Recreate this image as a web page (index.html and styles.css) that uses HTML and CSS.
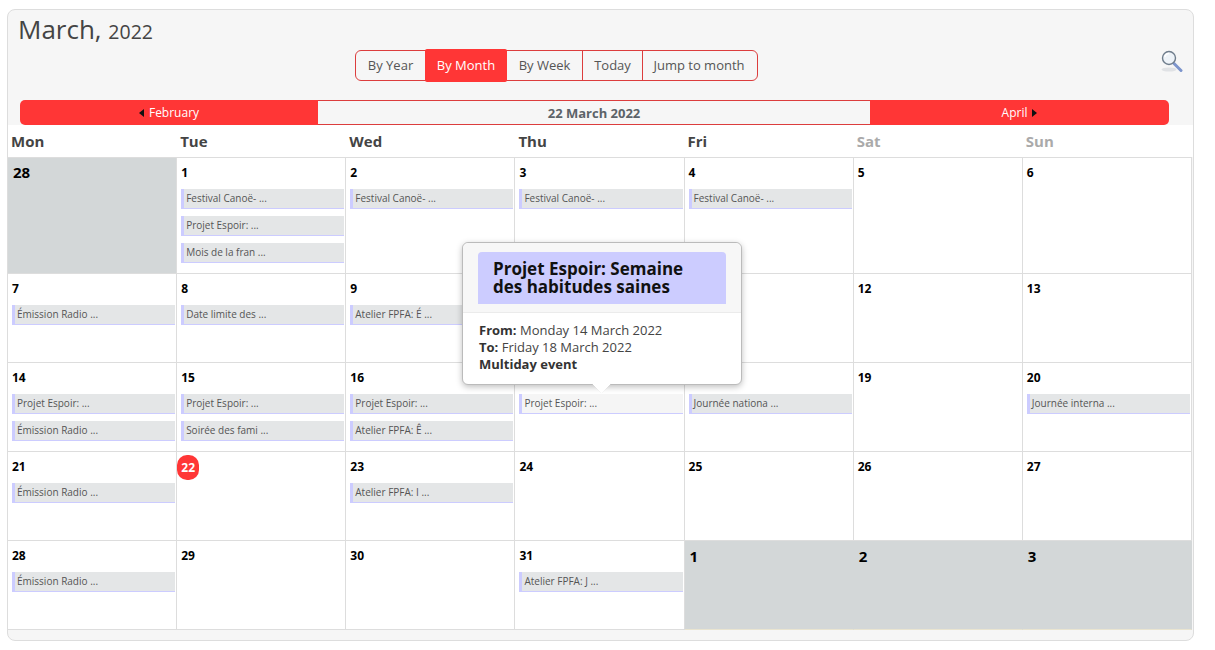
FILE: index.html
```html
<!DOCTYPE html>
<html lang="en">
<head>
<meta charset="utf-8">
<title>March 2022</title>
<link rel="stylesheet" href="styles.css">
</head>
<body>
<div class="cal">
  <header class="head">
    <h1 class="title">March, <small>2022</small></h1>
    <div class="tools">
      <nav class="views">
        <a class="view">By Year</a>
        <a class="view active">By Month</a>
        <a class="view">By Week</a>
        <a class="view">Today</a>
        <a class="view">Jump to month</a>
      </nav>
      <svg class="search" viewBox="0 0 22 23" width="22" height="23">
        <ellipse cx="8" cy="19.5" rx="7.5" ry="2" fill="#e0e2e5"/>
        <path d="M13 13.5l7 7" stroke="#7d95cc" stroke-width="3" stroke-linecap="round"/>
        <circle cx="8" cy="8" r="6.5" fill="#eef3f8" stroke="#6f7d8c" stroke-width="1.4"/>
        <path d="M4 7a4 4 0 0 1 4-3.5" fill="none" stroke="#fff" stroke-width="1.5"/>
      </svg>
    </div>
    <div class="pager">
      <a class="pg prev"><i class="arr arr-l"></i>February</a>
      <span class="cur">22 March 2022</span>
      <a class="pg next">April<i class="arr arr-r"></i></a>
    </div>
  </header>
  <div class="dows">
    <div class="dow">Mon</div><div class="dow">Tue</div><div class="dow">Wed</div><div class="dow">Thu</div><div class="dow">Fri</div><div class="dow off">Sat</div><div class="dow off">Sun</div>
  </div>
  <div class="grid">
    <div class="cell other"><span class="num big first">28</span></div>
    <div class="cell"><span class="num">1</span><div class="ev">Festival Canoë- ...</div><div class="ev">Projet Espoir: ...</div><div class="ev">Mois de la fran ...</div></div>
    <div class="cell"><span class="num">2</span><div class="ev">Festival Canoë- ...</div></div>
    <div class="cell"><span class="num">3</span><div class="ev">Festival Canoë- ...</div></div>
    <div class="cell"><span class="num">4</span><div class="ev">Festival Canoë- ...</div></div>
    <div class="cell"><span class="num">5</span></div>
    <div class="cell"><span class="num">6</span></div>

    <div class="cell"><span class="num">7</span><div class="ev">Émission Radio ...</div></div>
    <div class="cell"><span class="num">8</span><div class="ev">Date limite des ...</div></div>
    <div class="cell"><span class="num">9</span><div class="ev">Atelier FPFA: É ...</div></div>
    <div class="cell"></div>
    <div class="cell"></div>
    <div class="cell"><span class="num">12</span></div>
    <div class="cell"><span class="num">13</span></div>

    <div class="cell"><span class="num">14</span><div class="ev">Projet Espoir: ...</div><div class="ev">Émission Radio ...</div></div>
    <div class="cell"><span class="num">15</span><div class="ev">Projet Espoir: ...</div><div class="ev">Soirée des fami ...</div></div>
    <div class="cell"><span class="num">16</span><div class="ev">Projet Espoir: ...</div><div class="ev">Atelier FPFA: Ê ...</div></div>
    <div class="cell"><span class="num"></span><div class="ev hover">Projet Espoir: ...</div></div>
    <div class="cell"><span class="num"></span><div class="ev">Journée nationa ...</div></div>
    <div class="cell"><span class="num">19</span></div>
    <div class="cell"><span class="num">20</span><div class="ev">Journée interna ...</div></div>

    <div class="cell"><span class="num">21</span><div class="ev">Émission Radio ...</div></div>
    <div class="cell today-cell"><span class="today">22</span></div>
    <div class="cell"><span class="num">23</span><div class="ev">Atelier FPFA: I ...</div></div>
    <div class="cell"><span class="num">24</span></div>
    <div class="cell"><span class="num">25</span></div>
    <div class="cell"><span class="num">26</span></div>
    <div class="cell"><span class="num">27</span></div>

    <div class="cell"><span class="num">28</span><div class="ev">Émission Radio ...</div></div>
    <div class="cell"><span class="num">29</span></div>
    <div class="cell"><span class="num">30</span></div>
    <div class="cell"><span class="num">31</span><div class="ev">Atelier FPFA: J ...</div></div>
    <div class="cell other bottom"><span class="num big">1</span></div>
    <div class="cell other bottom"><span class="num big">2</span></div>
    <div class="cell other bottom"><span class="num big">3</span></div>
  </div>

  <div class="pop">
    <div class="pop-head"><h3 class="pop-title">Projet Espoir: Semaine des habitudes saines</h3></div>
    <div class="pop-body">
      <div><b>From:</b> Monday 14 March 2022</div>
      <div><b>To:</b> Friday 18 March 2022</div>
      <div><b>Multiday event</b></div>
    </div>
    <span class="pop-arrow"></span>
  </div>
</div>
</body>
</html>
```
FILE: styles.css
```css
* { box-sizing: border-box; }
html, body { margin: 0; padding: 0; background: #fff; }
body { font-family: "Open Sans", "Liberation Sans", sans-serif; color: #444; }

.cal {
  position: relative;
  width: 1187px;
  height: 632px;
  margin: 9px 0 0 7px;
  border: 1px solid #ddd;
  border-radius: 8px;
  background: #f6f6f6;
}

.head { height: 115px; padding: 0 24px 0 10px; display: flex; flex-direction: column; }
.title { margin: 0; height: 40px; padding-bottom: 2px; font-size: 26px; font-weight: 400; line-height: 38px; color: #444; }
.title small { font-size: 19.5px; }

.tools { height: 31px; display: flex; align-items: center; justify-content: space-between; padding-left: 337px; margin-right: -14px; }
.views { display: flex; height: 31px; border: 1px solid #dc3d3d; border-radius: 6px; width: 403px; }
.view { display: flex; align-items: center; justify-content: center; padding-bottom: 2px; font-size: 13px; color: #555; border-right: 1px solid #dc3d3d; }
.view:nth-child(1) { width: 69px; border-right: 0; }
.view:nth-child(2) { width: 82px; height: 33px; margin-top: -2px; background: #ff3636; color: #fff; border: 0; border-radius: 2px; }
.view:nth-child(3) { width: 76px; }
.view:nth-child(4) { width: 60px; }
.view:nth-child(5) { flex: 1; border-right: 0; padding-right: 2px; }
.search { display: block; margin-top: -9px; }

.pager { display: flex; height: 25px; margin-top: 19px; margin-left: 2px; }
.pg { flex: 0 0 298px; display: flex; align-items: center; justify-content: center; background: #ff3636; color: #fff; font-size: 12px; }
.prev { border-radius: 5px 0 0 5px; }
.next { flex-basis: 299px; border-radius: 0 5px 5px 0; }
.cur { flex: 1; display: flex; align-items: center; justify-content: center; border-top: 1px solid #dc3d3d; border-bottom: 1px solid #dc3d3d; font-size: 13px; font-weight: 700; color: #5c6369; }
.arr { width: 0; height: 0; border-top: 4px solid transparent; border-bottom: 4px solid transparent; }
.arr-l { border-right: 5px solid #111; margin-right: 5px; }
.arr-r { border-left: 5px solid #111; margin-left: 5px; }

.dows { display: grid; grid-template-columns: repeat(7, 1fr); width: 1184px; height: 32px; background: #fff; box-shadow: 1px 0 0 #fff; }
.dow { padding: 5px 0 0 3px; font-size: 15px; font-weight: 700; line-height: 22px; color: #444; }
.dow.off { color: #aaa; }

.grid {
  display: grid;
  grid-template-columns: repeat(7, 1fr);
  grid-template-rows: 116px 89px 89px 89px 89px;
  width: 1184px;
  border-top: 1px solid #ddd;
  background: #fff;
}
.cell { position: relative; padding: 6px 1px 0 4px; border-right: 1px solid #ddd; border-bottom: 1px solid #ddd; }
.other { background: #d3d7d8; }
.bottom { border-bottom: 1px solid #e9e4d0; border-right-color: #d3d7d8; }
.num { display: block; height: 18px; margin-bottom: 7px; font-size: 12px; font-weight: 700; line-height: 18px; color: #000; }
.big { font-size: 15px; height: 22px; line-height: 22px; margin-top: -2px; margin-left: 1px; }
.big.first { margin-top: -3px; }
.today-cell { padding-left: 0; }
.today {
  display: flex; align-items: center; justify-content: center;
  width: 22px; height: 25px; margin-top: -3px;
  border-radius: 10px; background: #ff3636; color: #fff; font-size: 12px; font-weight: 700;
}

.ev {
  height: 20px; margin-bottom: 7px; padding-left: 2px;
  border-left: 3px solid #ccf; border-bottom: 1px solid #ccf;
  background: #e4e6e7; color: #555; font-size: 10px; line-height: 19px; white-space: nowrap;
}
.ev.hover { background: #f5f5f5; }

.pop {
  position: absolute; left: 454px; top: 232px; width: 280px; height: 143px;
  background: #fff; border: 1px solid #bbb; border-radius: 6px;
  box-shadow: 0 2px 6px rgba(0, 0, 0, .25);
}
.pop-head { height: 70px; padding: 9px 15px 0; background: #f7f7f7; border-bottom: 1px solid #ebebeb; border-radius: 6px 6px 0 0; }
.pop-title { margin: 0; height: 52px; padding: 8px 30px 0 15px; border-radius: 4px 4px 0 0; background: #ccf; color: #111; font-size: 17px; font-weight: 700; line-height: 18px; }
.pop-body { padding: 9px 16px 0; font-size: 13px; line-height: 17px; color: #444; }
.pop-body b { color: #333; }
.pop-arrow {
  position: absolute; left: 131px; top: 133px; width: 15px; height: 15px;
  background: #fff; transform: rotate(45deg) scale(.95);
  box-shadow: 2px 2px 3px rgba(0, 0, 0, .12);
  clip-path: polygon(100% 0, 100% 100%, 0 100%);
}
```
